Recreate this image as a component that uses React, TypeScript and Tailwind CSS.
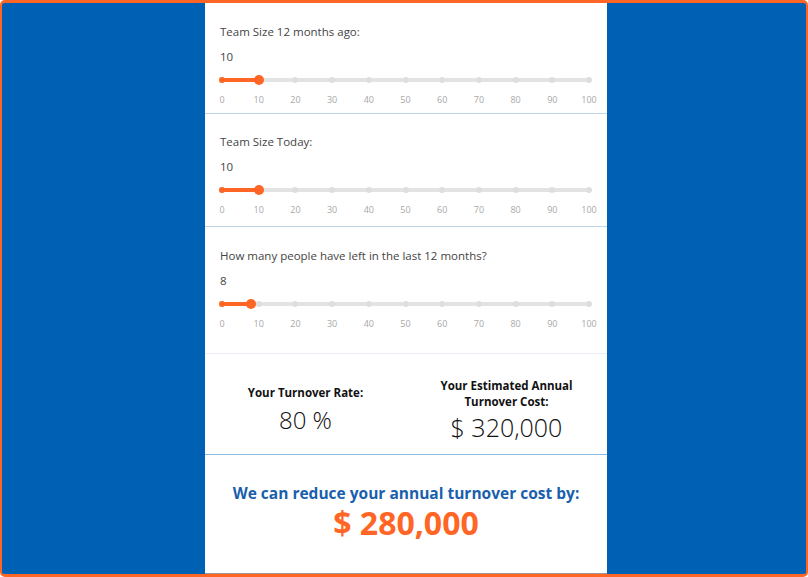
import React from "react";

const TICKS = [0, 10, 20, 30, 40, 50, 60, 70, 80, 90, 100];
const TRACK_W = 367;

function Slider({ label, value }: { label: string; value: number }) {
  const pos = (v: number) => (v / 100) * TRACK_W;
  return (
    <div className="flex flex-col pl-[15px] pr-[18px]">
      <div className="h-[16px] leading-[16px] text-[11.5px] text-[#444]">{label}</div>
      <div className="mt-[9px] h-[16px] leading-[16px] text-[11.5px] text-[#444]">{value}</div>
      <div className="relative mt-[9px] ml-[2px] h-[12px] w-[367px]">
        <div className="absolute left-0 right-0 top-[4px] h-[4px] rounded-full bg-[#e3e3e3]" />
        {TICKS.map((t) => (
          <div
            key={t}
            className="absolute top-[3px] h-[6px] w-[6px] -ml-[3px] rounded-full bg-[#dedede]"
            style={{ left: pos(t) }}
          />
        ))}
        <div className="absolute left-0 top-[4px] h-[4px] bg-[#ff6524]" style={{ width: pos(value) }} />
        <div className="absolute left-0 top-[3px] h-[6px] w-[6px] -ml-[3px] rounded-full bg-[#ff6524]" />
        <div
          className="absolute top-[1px] h-[10px] w-[10px] -ml-[5px] rounded-full bg-[#ff6524]"
          style={{ left: pos(value) }}
        />
      </div>
      <div className="relative mt-[8px] ml-[2px] h-[12px] w-[367px]">
        {TICKS.map((t) => (
          <span
            key={t}
            className="absolute top-0 -translate-x-1/2 text-[9px] leading-[12px] text-[#a8a8a8]"
            style={{ left: pos(t) }}
          >
            {t}
          </span>
        ))}
      </div>
    </div>
  );
}

export default function App() {
  return (
    <div
      className="h-[577px] w-[808px] overflow-hidden rounded-[5px] border-x-[2px] border-t-[3px] border-b-[3px] border-[#ff6524] bg-[#0061b4]"
      style={{ fontFamily: "'Open Sans', Lato, sans-serif" }}
    >
      <div className="flex h-full justify-start pl-[203px]">
        <div className="flex h-full w-[402px] flex-col bg-white border-b border-[#9a9a9a]">
          <div className="h-[111px] pt-[21px] border-b border-[#bcd5ea]">
            <Slider label="Team Size 12 months ago:" value={10} />
          </div>
          <div className="h-[113px] pt-[20px] border-b border-[#bcd5ea]">
            <Slider label="Team Size Today:" value={10} />
          </div>
          <div className="h-[127px] pt-[21px] border-b border-[#e8eef4]">
            <Slider label="How many people have left in the last 12 months?" value={8} />
          </div>
          <div className="grid h-[101px] grid-cols-2 items-center pt-[10px] border-b border-[#8dbae0] text-[#111]">
            <div className="flex flex-col items-center">
              <div className="text-[11.5px] font-bold leading-[16px]">Your Turnover Rate:</div>
              <div className="mt-[5px] text-[24px] leading-[28px] font-light">80 %</div>
            </div>
            <div className="flex flex-col items-center">
              <div className="text-center text-[11.5px] font-bold leading-[16px]">
                Your Estimated Annual
                <br />
                Turnover Cost:
              </div>
              <div className="mt-[3px] text-[25px] leading-[28px] font-light">$ 320,000</div>
            </div>
          </div>
          <div className="flex flex-1 flex-col items-center pt-[28px]">
            <div className="text-[15.5px] font-bold leading-[20px] text-[#1a5fad]">
              We can reduce your annual turnover cost by:
            </div>
            <div className="text-[32px] font-bold leading-[40px] text-[#ff6524]">$ 280,000</div>
          </div>
        </div>
      </div>
    </div>
  );
}
